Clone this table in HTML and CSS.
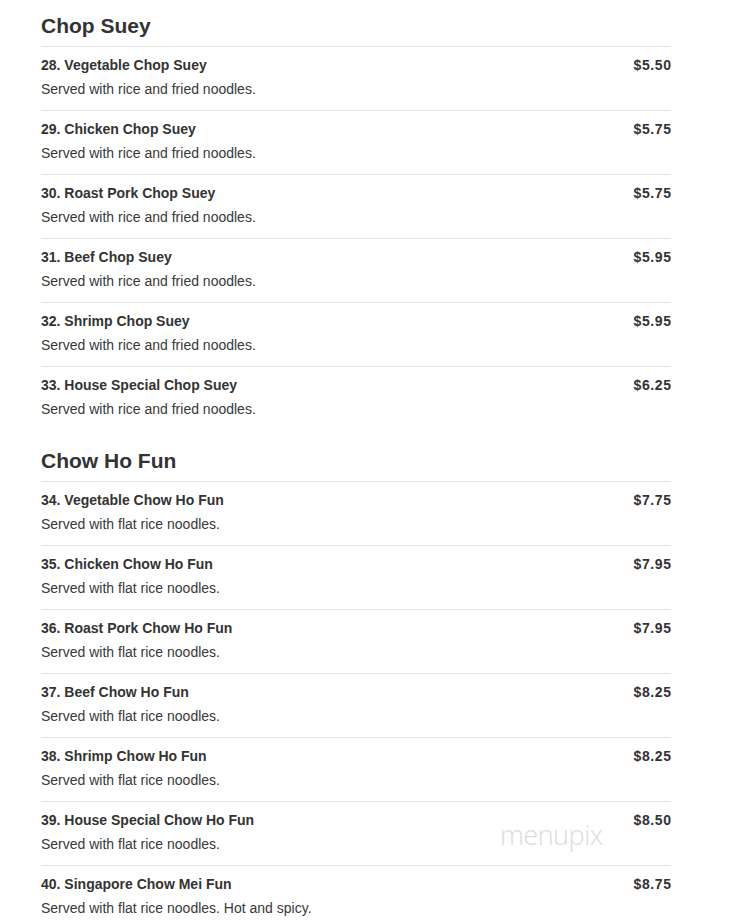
FILE: index.html
```html
<!DOCTYPE html>
<html>
<head>
<meta charset="utf-8">
<link rel="stylesheet" href="styles.css">
</head>
<body>
<div class="menu">
  <section class="section">
    <h2 class="section-title">Chop Suey</h2>
    <div class="item"><div class="item-head"><span class="item-name">28. Vegetable Chop Suey</span><span class="item-price">$5.50</span></div><div class="item-desc">Served with rice and fried noodles.</div></div>
    <div class="item"><div class="item-head"><span class="item-name">29. Chicken Chop Suey</span><span class="item-price">$5.75</span></div><div class="item-desc">Served with rice and fried noodles.</div></div>
    <div class="item"><div class="item-head"><span class="item-name">30. Roast Pork Chop Suey</span><span class="item-price">$5.75</span></div><div class="item-desc">Served with rice and fried noodles.</div></div>
    <div class="item"><div class="item-head"><span class="item-name">31. Beef Chop Suey</span><span class="item-price">$5.95</span></div><div class="item-desc">Served with rice and fried noodles.</div></div>
    <div class="item"><div class="item-head"><span class="item-name">32. Shrimp Chop Suey</span><span class="item-price">$5.95</span></div><div class="item-desc">Served with rice and fried noodles.</div></div>
    <div class="item"><div class="item-head"><span class="item-name">33. House Special Chop Suey</span><span class="item-price">$6.25</span></div><div class="item-desc">Served with rice and fried noodles.</div></div>
  </section>
  <section class="section">
    <h2 class="section-title">Chow Ho Fun</h2>
    <div class="item"><div class="item-head"><span class="item-name">34. Vegetable Chow Ho Fun</span><span class="item-price">$7.75</span></div><div class="item-desc">Served with flat rice noodles.</div></div>
    <div class="item"><div class="item-head"><span class="item-name">35. Chicken Chow Ho Fun</span><span class="item-price">$7.95</span></div><div class="item-desc">Served with flat rice noodles.</div></div>
    <div class="item"><div class="item-head"><span class="item-name">36. Roast Pork Chow Ho Fun</span><span class="item-price">$7.95</span></div><div class="item-desc">Served with flat rice noodles.</div></div>
    <div class="item"><div class="item-head"><span class="item-name">37. Beef Chow Ho Fun</span><span class="item-price">$8.25</span></div><div class="item-desc">Served with flat rice noodles.</div></div>
    <div class="item"><div class="item-head"><span class="item-name">38. Shrimp Chow Ho Fun</span><span class="item-price">$8.25</span></div><div class="item-desc">Served with flat rice noodles.</div></div>
    <div class="item"><div class="item-head"><span class="item-name">39. House Special Chow Ho Fun</span><span class="item-price">$8.50</span></div><div class="item-desc">Served with flat rice noodles.</div></div>
    <div class="item"><div class="item-head"><span class="item-name">40. Singapore Chow Mei Fun</span><span class="item-price">$8.75</span></div><div class="item-desc">Served with flat rice noodles. Hot and spicy.</div></div>
  </section>
</div>
<div class="watermark">menupix</div>
</body>
</html>
```
FILE: styles.css
```css
html, body {
  margin: 0;
  padding: 0;
  background: #fff;
}
body {
  font-family: "Liberation Sans", Arial, sans-serif;
  color: #333;
  position: relative;
  height: 920px;
  overflow: hidden;
}
.menu {
  width: 630px;
  margin-left: 41px;
  padding-top: 14px;
}
.section + .section {
  margin-top: 19px;
}
.section-title {
  margin: 0;
  font-size: 21px;
  line-height: 24px;
  font-weight: bold;
  color: #333;
  padding-bottom: 8px;
}
.item {
  border-top: 1px solid #e3e3e3;
  padding: 8px 0 11px;
}
.item-head {
  display: flex;
  justify-content: space-between;
  font-size: 14px;
  line-height: 20px;
  font-weight: bold;
}
.item-price {
  letter-spacing: 0.6px;
  margin-right: -0.6px;
}
.item-desc {
  margin-top: 4px;
  font-size: 14px;
  line-height: 20px;
  color: #383838;
}
.watermark {
  position: absolute;
  left: 500px;
  top: 816px;
  font-family: "Open Sans", sans-serif;
  font-weight: 300;
  font-size: 27px;
  letter-spacing: -0.5px;
  color: #dcdcdc;
}
```
